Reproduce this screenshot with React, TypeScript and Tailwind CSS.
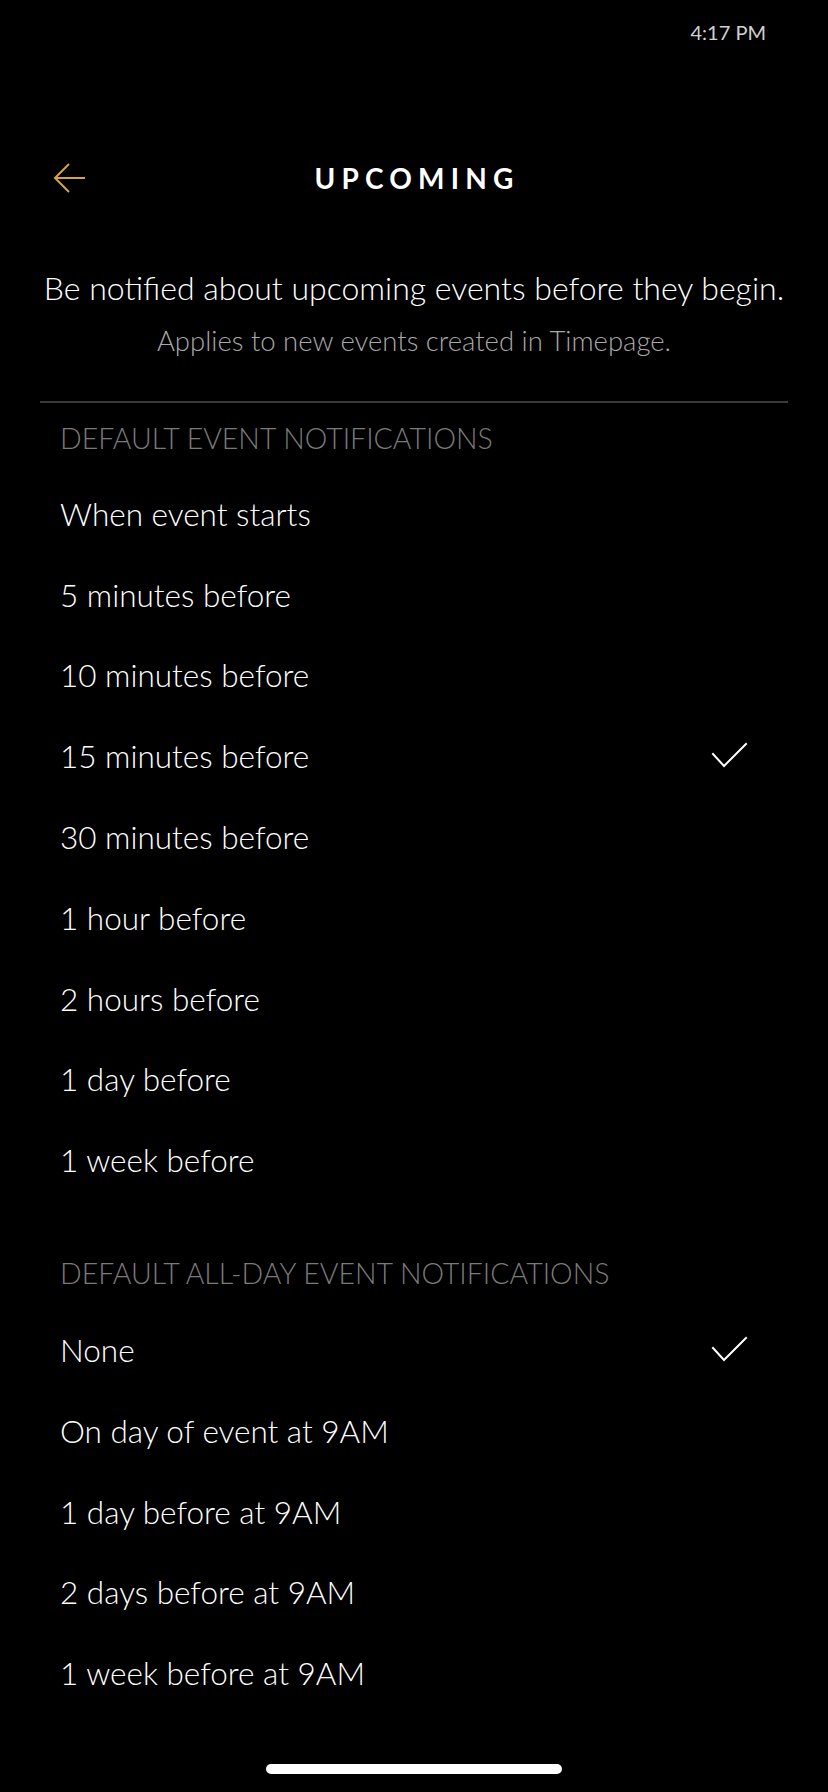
import React from "react";

const eventOptions = [
	"When event starts",
	"5 minutes before",
	"10 minutes before",
	"15 minutes before",
	"30 minutes before",
	"1 hour before",
	"2 hours before",
	"1 day before",
	"1 week before",
];

const allDayOptions = [
	"None",
	"On day of event at 9AM",
	"1 day before at 9AM",
	"2 days before at 9AM",
	"1 week before at 9AM",
];

const font = { fontFamily: "Lato, 'Open Sans', sans-serif" };

const Check = () => (
	<svg width="40" height="30" viewBox="0 0 40 30" fill="none">
		<polyline
			points="2,12 13,24 35,2"
			stroke="#ffffff"
			strokeWidth="2"
			strokeLinecap="square"
		/>
	</svg>
);

const OptionRow = ({ label, checked }: { label: string; checked: boolean }) => (
	<div className="flex items-center justify-between h-[80.8px] pl-[60px] pr-[77px]">
		<span className="text-white text-[31.5px] font-light">{label}</span>
		{checked ? <Check /> : null}
	</div>
);

const SectionHeader = ({ title }: { title: string }) => (
	<div className="pl-[60px] h-[34px] leading-[34px] text-[28.5px] font-light text-[#7a7a7a] uppercase">
		{title}
	</div>
);

export default function App() {
	return (
		<div className="w-[828px] h-[1792px] bg-black relative overflow-hidden" style={font}>
			{/* status bar */}
			<div className="h-[64px] flex items-center justify-end pr-[62px]">
				<span className="text-[#d0d0d0] text-[20px]">4:17 PM</span>
			</div>

			{/* nav */}
			<div className="mt-[74px] h-[80px] flex items-center relative">
				<svg className="absolute left-[52px]" width="36" height="34" viewBox="0 0 36 34" fill="none">
					<path d="M3 17 H33 M17 3 L3 17 L17 31" stroke="#d4a53c" strokeWidth="2" />
				</svg>
				<h1 className="w-full text-center text-white text-[28px] font-bold tracking-[0.22em] pl-[6px]">
					UPCOMING
				</h1>
			</div>

			{/* description */}
			<p className="mt-[52px] h-[36px] leading-[36px] text-center text-white text-[32px] font-light">
				Be notified about upcoming events before they begin.
			</p>
			<p className="mt-[20px] h-[30px] leading-[30px] text-center text-[#a8a8a8] text-[27.5px] font-light">
				Applies to new events created in Timepage.
			</p>

			<div className="mt-[45px] mx-[40px] h-[2px] bg-[#3a3a3a]" />

			<div className="mt-[18px]">
				<SectionHeader title="Default event notifications" />
			</div>
			<div className="mt-[19px]">
				{eventOptions.map((o) => (
					<OptionRow key={o} label={o} checked={o === "15 minutes before"} />
				))}
			</div>

			<div className="mt-[55px]">
				<SectionHeader title="Default all-day event notifications" />
			</div>
			<div className="mt-[20px]">
				{allDayOptions.map((o) => (
					<OptionRow key={o} label={o} checked={o === "None"} />
				))}
			</div>

			{/* home indicator */}
			<div className="absolute bottom-[18px] left-[266px] w-[296px] h-[10px] rounded-full bg-white" />
		</div>
	);
}
